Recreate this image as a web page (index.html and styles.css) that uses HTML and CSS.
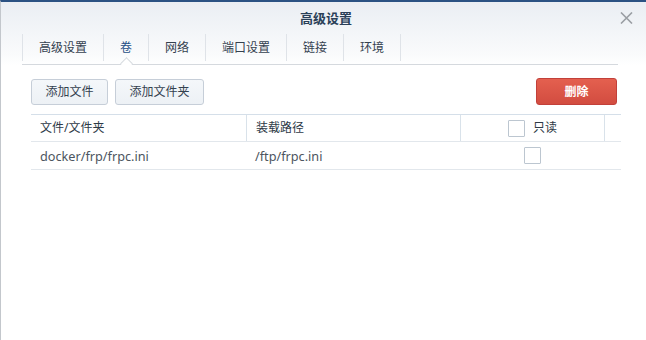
FILE: index.html
```html
<!DOCTYPE html>
<html lang="zh-CN">
<head>
<meta charset="utf-8">
<title>高级设置</title>
<link rel="stylesheet" href="styles.css">
</head>
<body>
<div class="window">
  <div class="head">
    <div class="titlebar">
      <span class="title">高级设置</span>
      <span class="close"><svg width="13" height="12" viewBox="0 0 13 12"><path d="M1 0.5 L12 11.5 M12 0.5 L1 11.5" stroke="#9a9ea3" stroke-width="1.6" fill="none"/></svg></span>
    </div>
    <div class="tabs">
      <div class="tab">高级设置</div>
      <div class="tab active">卷</div>
      <div class="tab">网络</div>
      <div class="tab">端口设置</div>
      <div class="tab">链接</div>
      <div class="tab last">环境</div>
    </div>
  </div>
  <div class="content">
    <div class="toolbar">
      <button class="btn add-file">添加文件</button>
      <button class="btn add-folder">添加文件夹</button>
      <span class="spacer"></span>
      <button class="btn danger">删除</button>
    </div>
    <div class="table">
      <div class="row header">
        <div class="cell c1">文件/文件夹</div>
        <div class="cell c2">装载路径</div>
        <div class="cell c3"><span class="check"></span><span>只读</span></div>
        <div class="cell c4"></div>
      </div>
      <div class="row data">
        <div class="cell c1 latin">docker/frp/frpc.ini</div>
        <div class="cell c2 latin">/ftp/frpc.ini</div>
        <div class="cell c3"><span class="check"></span></div>
        <div class="cell c4"></div>
      </div>
    </div>
  </div>
</div>
</body>
</html>
```

FILE: styles.css
```css
* { box-sizing: border-box; }
html, body { margin: 0; padding: 0; }
body {
  width: 646px;
  height: 340px;
  overflow: hidden;
  background: #ffffff;
  font-family: "Noto Sans", "Noto Sans CJK SC", sans-serif;
  font-size: 12px;
  color: #333;
}
.window {
  height: 340px;
  border-top: 2px solid #2b5283;
  border-left: 1px solid #c3c7cc;
  background: #fff;
}
.head {
  background: linear-gradient(#eaeef3, #fafbfc 85%, #ffffff);
  padding: 0 28px 0 21px;
}
.titlebar {
  height: 31px;
  display: flex;
  align-items: center;
  justify-content: center;
  position: relative;
}
.title {
  font-size: 13px;
  font-weight: bold;
  color: #2a3f58;
  line-height: 16px;
  margin-left: 12px;
}
.close {
  position: absolute;
  right: -15px;
  top: 10px;
  width: 13px;
  height: 12px;
  display: block;
}
.close svg { display: block; }
.tabs {
  display: flex;
  height: 32px;
  border-bottom: 1px solid #d5d9de;
  align-items: stretch;
}
.tab {
  position: relative;
  padding: 0 16px;
  display: flex;
  align-items: center;
  line-height: 14px;
  color: #34414f;
  border-left: 1px solid #dfe3e8;
  margin: 1px 0 3px;
}
.tab.last { border-right: 1px solid #dfe3e8; }
.tab.active { color: #1f4f86; }
.tab.active::after {
  content: "";
  position: absolute;
  left: 50%;
  bottom: -7px;
  width: 8px;
  height: 8px;
  margin-left: -4px;
  background: #fff;
  border-top: 1px solid #d5d9de;
  border-left: 1px solid #d5d9de;
  transform: rotate(45deg);
}
.content {
  padding: 13px 29px 0 30px;
}
.toolbar {
  display: flex;
  align-items: center;
  gap: 7px;
  height: 27px;
}
.spacer { flex: 1; }
.btn {
  font-family: "Noto Sans", "Noto Sans CJK SC", sans-serif;
  font-size: 12px;
  height: 26px;
  padding: 0;
  border: 1px solid #c6ced8;
  border-radius: 3px;
  background: linear-gradient(#f4f7fa, #edf1f5);
  color: #34414f;
  line-height: 24px;
  margin: 0;
  text-align: center;
}
.btn.add-file { width: 77px; }
.btn.add-folder { width: 89px; }
.btn.danger {
  width: 81px;
  height: 27px;
  background: linear-gradient(#e4604f, #d24c40);
  border-color: #c2403a;
  color: #fff;
  font-weight: bold;
}
.table {
  margin-top: 9px;
  width: 590px;
  border-top: 1px solid #d5dfe9;
}
.row {
  display: flex;
  border-bottom: 1px solid #e2e7ec;
}
.row.header { height: 27px; }
.row.data { height: 28px; }
.cell {
  display: flex;
  align-items: center;
  padding-left: 9px;
  line-height: 14px;
}
.header .cell { color: #2e3a47; }
.data .cell { color: #4c5560; }
.cell.latin { font-size: 12.7px; }
.header .cell + .cell { border-left: 1px solid #d9e2ea; }
.c1 { width: 215px; }
.c2 { width: 214px; }
.c3 { width: 144px; justify-content: center; padding-left: 0; gap: 8px; }
.c4 { flex: 1; }
.check {
  display: inline-block;
  width: 17px;
  height: 17px;
  border: 1px solid #bcc6d0;
  background: #fff;
  border-radius: 1px;
}
```
